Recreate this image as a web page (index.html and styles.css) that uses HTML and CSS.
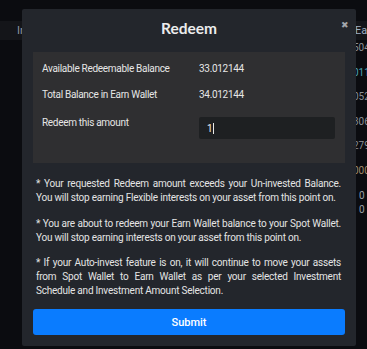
FILE: index.html
```html
<!DOCTYPE html>
<html>
<head>
<meta charset="utf-8">
<link rel="stylesheet" href="styles.css">
</head>
<body>
<div class="page">
  <div class="bg-head">
    <span class="bg-left">In</span>
    <span class="bg-right">Ea</span>
  </div>
  <div class="bg-col">
    <span class="c1">504</span>
    <span class="c2">011</span>
    <span class="c1">052</span>
    <span class="c1">306</span>
    <span class="c1">279</span>
    <span class="c3">000</span>
    <span class="c4">0</span>
    <span class="c4 last">0</span>
  </div>

  <div class="modal">
    <div class="modal-head">
      <h1 class="title">Redeem</h1>
      <span class="close">&#x2716;</span>
    </div>
    <div class="modal-body">
      <div class="panel">
        <div class="row"><span class="label">Available Redeemable Balance</span><span class="value">33.012144</span></div>
        <div class="row"><span class="label">Total Balance in Earn Wallet</span><span class="value">34.012144</span></div>
        <div class="row row-input"><span class="label">Redeem this amount</span><div class="input"><span>1</span><span class="caret"></span></div></div>
      </div>
      <div class="notes">
        <p>* Your requested Redeem amount exceeds your Un-invested Balance. You will stop earning Flexible interests on your asset from this point on.</p>
        <p>* You are about to redeem your Earn Wallet balance to your Spot Wallet. You will stop earning interests on your asset from this point on.</p>
        <p>* If your Auto-invest feature is on, it will continue to move your assets from Spot Wallet to Earn Wallet as per your selected Investment Schedule and Investment Amount Selection.</p>
      </div>
      <button class="submit">Submit</button>
    </div>
  </div>
</div>
</body>
</html>
```

FILE: styles.css
```css
* { box-sizing: border-box; }
html, body { margin: 0; padding: 0; }
body {
  background: #0b0c10;
  width: 367px;
  height: 349px;
  overflow: hidden;
  font-family: Roboto, "Noto Sans", sans-serif;
}
.page {
  position: relative;
  width: 367px;
  height: 349px;
}
.bg-head {
  position: absolute;
  left: 0; right: 0; top: 21px;
  height: 19px;
  background: #141519;
  font-size: 11px;
  line-height: 19px;
  color: #8d96a3;
}
.bg-left { position: absolute; left: 17px; }
.bg-right { position: absolute; left: 355px; color: #9fb0c4; }
.bg-col {
  position: absolute;
  left: 353px;
  top: 41px;
  display: flex;
  flex-direction: column;
  font-size: 10px;
  line-height: 14px;
}
.bg-col span { height: 24.6px; }
.c1 { color: #8a8f96; }
.c2 { color: #4aa6b8; }
.c3 { color: #a08b6a; }
.c4 { color: #9aa0a6; padding-left: 6px; }
.bg-col .last { height: 14px; margin-top: -10px; }

.modal {
  position: absolute;
  left: 22px;
  top: 9px;
  width: 334px;
  height: 337px;
  background: #23262c;
  border-radius: 2px;
}
.modal-head {
  position: relative;
  height: 43px;
  display: flex;
  align-items: center;
  justify-content: center;
  padding-bottom: 6px;
}
.title {
  margin: 0;
  font-family: Lato, "Open Sans", sans-serif;
  font-weight: 700;
  font-size: 15.5px;
  color: #ececec;
  letter-spacing: 0;
}
.close {
  position: absolute;
  right: 7px;
  top: 11px;
  font-size: 9px;
  color: #a3a6ab;
}
.modal-body {
  padding: 0 11px;
}
.panel {
  background: #2f2f31;
  padding: 3px 10px 24px 9px;
  display: flex;
  flex-direction: column;
}
.row {
  display: flex;
  align-items: center;
  height: 26px;
  font-size: 10px;
  color: #e6e6e6;
  letter-spacing: -0.3px;
}
.label { width: 157px; flex: none; }
.row-input {
  align-items: flex-start;
  height: auto;
  padding-top: 10px;
}
.row-input .label { padding-top: 0; line-height: 12px; }
.input {
  flex: 1;
  height: 22px;
  background: #1e2022;
  border-radius: 2px;
  display: flex;
  align-items: center;
  padding-left: 8px;
  color: #f0f0f0;
  font-size: 10px;
}
.caret {
  display: inline-block;
  width: 1px;
  height: 11px;
  background: #e8e8e8;
  margin-left: 1px;
}
.notes {
  padding: 14px 4px 0 3px;
  font-size: 10px;
  line-height: 14px;
  color: #e4e4e4;
  text-align: justify;
  letter-spacing: -0.22px;
}
.notes p { margin: 0 0 11.5px; }
.notes p:last-child { margin-bottom: 11px; }
.submit {
  display: block;
  width: 100%;
  height: 26px;
  border: 0;
  border-radius: 3px;
  background: #0a7cff;
  color: #ffffff;
  font-family: Roboto, sans-serif;
  font-size: 11px;
  font-weight: 500;
  padding: 0;
}
```
